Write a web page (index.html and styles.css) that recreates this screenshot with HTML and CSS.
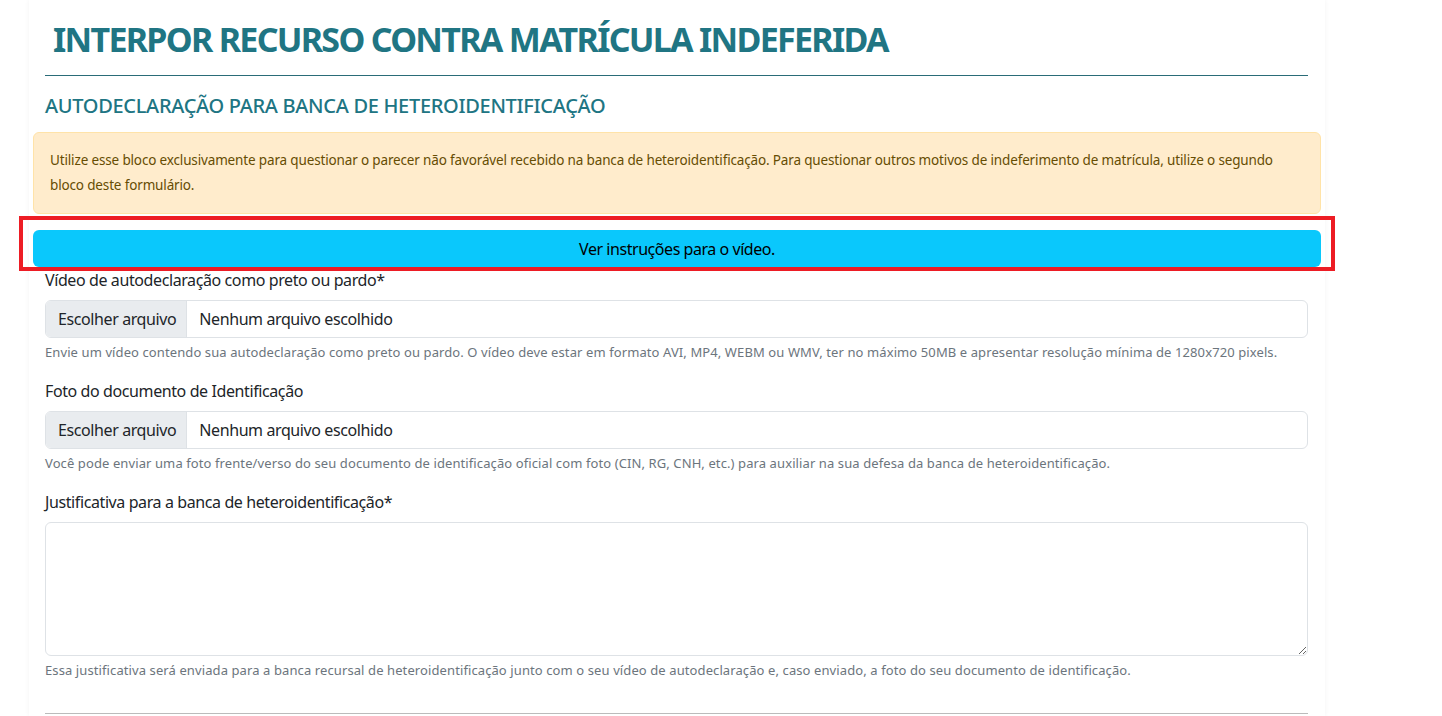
FILE: index.html
```html
<!DOCTYPE html>
<html lang="pt-BR">
<head>
    <meta charset="UTF-8">
    <meta name="viewport" content="width=device-width, initial-scale=1.0">
    <title>Interpor recurso contra matrícula indeferida</title>
    <link rel="stylesheet" href="styles.css">
</head>
<body>
    <div class="container">
        <div class="header">
            <h1>INTERPOR RECURSO CONTRA MATRÍCULA INDEFERIDA</h1>
            <hr class="title-line">
            <h2>AUTODECLARAÇÃO PARA BANCA DE HETEROIDENTIFICAÇÃO</h2>
        </div>

        <div class="alert-warning">
            Utilize esse bloco exclusivamente para questionar o parecer não favorável recebido na banca de heteroidentificação. Para questionar outros motivos de indeferimento de matrícula, utilize o segundo bloco deste formulário.
        </div>

        <div class="highlight">
            <button type="button" class="btn-info">Ver instruções para o vídeo.</button>
        </div>

        <form class="fields">
            <div class="form-group">
                <label class="field-label">Vídeo de autodeclaração como preto ou pardo*</label>
                <div class="file-input">
                    <span class="file-btn">Escolher arquivo</span>
                    <span class="file-name">Nenhum arquivo escolhido</span>
                </div>
                <div class="help">Envie um vídeo contendo sua autodeclaração como preto ou pardo. O vídeo deve estar em formato AVI, MP4, WEBM ou WMV, ter no máximo 50MB e apresentar resolução mínima de 1280x720 pixels.</div>
            </div>

            <div class="form-group">
                <label class="field-label">Foto do documento de Identificação</label>
                <div class="file-input">
                    <span class="file-btn">Escolher arquivo</span>
                    <span class="file-name">Nenhum arquivo escolhido</span>
                </div>
                <div class="help">Você pode enviar uma foto frente/verso do seu documento de identificação oficial com foto (CIN, RG, CNH, etc.) para auxiliar na sua defesa da banca de heteroidentificação.</div>
            </div>

            <div class="form-group">
                <label class="field-label" for="justificativa">Justificativa para a banca de heteroidentificação*</label>
                <textarea id="justificativa" class="text-area"></textarea>
                <div class="help">Essa justificativa será enviada para a banca recursal de heteroidentificação junto com o seu vídeo de autodeclaração e, caso enviado, a foto do seu documento de identificação.</div>
            </div>

            <hr class="end-line">
        </form>
    </div>
</body>
</html>
```

FILE: styles.css
```css
body {
    margin: 0;
    background: #fff;
    font-family: 'Noto Sans', 'Open Sans', sans-serif;
    color: #212529;
}

.container {
    margin-left: 29px;
    width: 1296px;
    min-height: 716px;
    padding: 0 4px;
    box-sizing: border-box;
    box-shadow: 0 0 5px rgba(0, 0, 0, 0.05);
}

.header {
    padding: 18px 13px 0 12px;
}

h1 {
    margin: 0 0 0 8px;
    font-size: 34px;
    line-height: 42px;
    font-weight: 700;
    letter-spacing: -1.7px;
    color: #207583;
}

.title-line {
    margin: 15px 0 0;
    border: none;
    border-top: 1px solid #2a6c78;
}

h2 {
    margin: 16px 0 0;
    font-size: 20px;
    line-height: 28px;
    font-weight: 500;
    letter-spacing: -0.3px;
    color: #207583;
}

.alert-warning {
    margin-top: 12px;
    padding: 15px 16px;
    background: #ffeccc;
    border: 1px solid #ffe3a8;
    border-radius: 6px;
    color: #664d03;
    font-size: 13.5px;
    letter-spacing: -0.15px;
    line-height: 25px;
}

.highlight {
    position: relative;
    margin-top: 16px;
}

.highlight::after {
    content: '';
    position: absolute;
    left: -14px;
    right: -14px;
    top: -14px;
    bottom: -4px;
    border: 4px solid #ed1c24;
    pointer-events: none;
}

.btn-info {
    display: block;
    width: 100%;
    height: 37px;
    background: #0ac8fc;
    border: none;
    border-radius: 6px;
    font-family: inherit;
    font-size: 16px;
    letter-spacing: -0.45px;
    color: #000;
    cursor: pointer;
}

.fields {
    padding: 0 13px 0 12px;
}

.form-group {
    margin-top: 1px;
    margin-bottom: 17px;
}

.field-label {
    display: block;
    font-size: 16px;
    line-height: 24px;
    letter-spacing: -0.4px;
    margin-bottom: 8px;
}

.file-input {
    display: flex;
    height: 38px;
    border: 1px solid #dee2e6;
    border-radius: 6px;
    box-sizing: border-box;
    overflow: hidden;
    font-size: 16px;
    letter-spacing: -0.4px;
}

.file-btn {
    display: flex;
    align-items: center;
    padding: 0 10px 0 12px;
    background: #e9ecef;
    border-right: 1px solid #dee2e6;
}

.file-name {
    display: flex;
    align-items: center;
    padding: 0 12px;
}

.help {
    margin-top: 4px;
    font-size: 13px;
    line-height: 20px;
    letter-spacing: 0.1px;
    color: #6c757d;
}

.text-area {
    display: block;
    width: 100%;
    height: 134px;
    box-sizing: border-box;
    border: 1px solid #dee2e6;
    border-radius: 6px;
    font-family: inherit;
    font-size: 16px;
}

.end-line {
    margin: 33px 0 0;
    border: none;
    border-top: 1px solid #bbb;
}
```
